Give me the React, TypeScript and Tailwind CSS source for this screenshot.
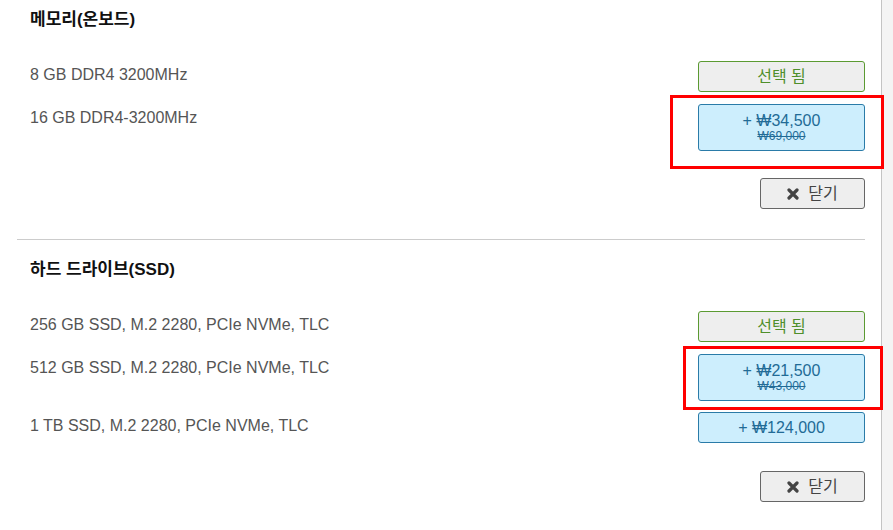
import React from 'react'

const font = { fontFamily: '"Liberation Sans", Arial, "Noto Sans CJK KR", sans-serif' }

type Opt = { label: string; selected?: boolean; price?: string; old?: string }

const SelectedBtn = () => (
  <button className="w-[167px] h-[31px] shrink-0 rounded-[3px] border border-[#5b9a32] bg-[#eeeeee] text-[16px] text-[#4f8f2a]">
    선택 됨
  </button>
)

const PriceBtn = ({ price, old }: { price: string; old?: string }) => (
  <button
    className={`w-[167px] shrink-0 rounded-[3px] border border-[#2a7ba8] bg-[#cdeefd] text-[#226b96] flex flex-col items-center justify-center ${old ? 'h-[47px]' : 'h-[31px]'}`}
  >
    <span className="text-[16px] leading-[18px]">+ ₩{price}</span>
    {old && <span className="text-[12px] leading-[13px] line-through">₩{old}</span>}
  </button>
)

const CloseBtn = () => (
  <div className="flex justify-end">
    <button className="w-[105px] h-[31px] rounded-[3px] border border-[#666] bg-[#eeeeee] text-[#444] text-[16px] flex items-center justify-center gap-[9px]">
      <svg width="12" height="12" viewBox="0 0 12 12">
        <path d="M2 2 L10 10 M10 2 L2 10" stroke="#444" strokeWidth="3.2" strokeLinecap="round" />
      </svg>
      <span>닫기</span>
    </button>
  </div>
)

const Section = ({ title, opts, gaps }: { title: string; opts: Opt[]; gaps: number[] }) => (
  <div>
    <h2 className="pl-[13px] text-[17px] leading-[20px] font-bold text-[#111]">{title}</h2>
    <div className="mt-[31px] flex flex-col">
      {opts.map((o, i) => (
        <div key={i} className="flex items-start justify-between" style={{ marginTop: i === 0 ? 0 : gaps[i - 1] }}>
          <span className="pl-[13px] pt-[4px] text-[16px] leading-[20px] text-[#555]">{o.label}</span>
          {o.selected ? <SelectedBtn /> : <PriceBtn price={o.price!} old={o.old} />}
        </div>
      ))}
    </div>
  </div>
)

export default function App() {
  return (
    <div className="relative flex w-[893px] h-[530px] bg-white overflow-hidden" style={font}>
      <div className="w-[881px] pl-[17px] pr-[16px] pt-[10px]">
        <Section
          title="메모리(온보드)"
          gaps={[12]}
          opts={[
            { label: '8 GB DDR4 3200MHz', selected: true },
            { label: '16 GB DDR4-3200MHz', price: '34,500', old: '69,000' },
          ]}
        />
        <div className="mt-[27px]">
          <CloseBtn />
        </div>
        <hr className="mt-[30px] border-0 h-px bg-[#cccccc]" />
        <div className="mt-[20px]">
          <Section
            title="하드 드라이브(SSD)"
            gaps={[12, 11]}
            opts={[
              { label: '256 GB SSD, M.2 2280, PCIe NVMe, TLC', selected: true },
              { label: '512 GB SSD, M.2 2280, PCIe NVMe, TLC', price: '21,500', old: '43,000' },
              { label: '1 TB SSD, M.2 2280, PCIe NVMe, TLC', price: '124,000' },
            ]}
          />
        </div>
        <div className="mt-[28px]">
          <CloseBtn />
        </div>
      </div>
      <div className="w-[12px] border-l border-[#c4c4c4] bg-[#f4f4f4]" />

      {/* highlight boxes */}
      <div className="absolute left-[670px] top-[95px] w-[214px] h-[74px] border-[3px] border-[#ff0000]" />
      <div className="absolute left-[683px] top-[346px] w-[200px] h-[64px] border-[3px] border-[#ff0000]" />
    </div>
  )
}
